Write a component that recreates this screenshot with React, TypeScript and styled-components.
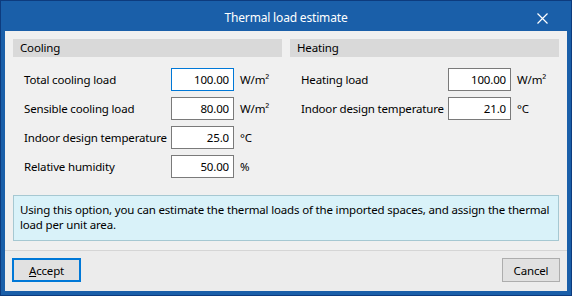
import { createGlobalStyle, styled } from 'styled-components';

const GlobalStyle = createGlobalStyle`
  html, body {
    margin: 0;
    padding: 0;
    background: #f0f0f0;
  }
  body {
    font-family: "Noto Sans", "Open Sans", sans-serif;
    font-size: 11.5px;
    letter-spacing: -0.17px;
    color: #000;
  }
`;

type Field = { label: string; value: string; unit: string; focused?: boolean };

const cooling: Field[] = [
  { label: 'Total cooling load', value: '100.00', unit: 'W/m²', focused: true },
  { label: 'Sensible cooling load', value: '80.00', unit: 'W/m²' },
  { label: 'Indoor design temperature', value: '25.0', unit: '°C' },
  { label: 'Relative humidity', value: '50.00', unit: '%' },
];

const heating: Field[] = [
  { label: 'Heating load', value: '100.00', unit: 'W/m²' },
  { label: 'Indoor design temperature', value: '21.0', unit: '°C' },
];

function Section({ title, fields }: { title: string; fields: Field[] }) {
  return (
    <SectionBox>
      <SectionHeader>{title}</SectionHeader>
      <FieldGrid>
        {fields.map((f) => (
          <FieldRow key={f.label}>
            <FieldLabel>{f.label}</FieldLabel>
            <ValueBox $focused={f.focused}>{f.value}</ValueBox>
            <Unit>{f.unit}</Unit>
          </FieldRow>
        ))}
      </FieldGrid>
    </SectionBox>
  );
}

function App() {
  return (
    <>
      <GlobalStyle />
      <Window>
        <TitleBar>
          <Title>Thermal load estimate</Title>
          <CloseButton>
            <svg width="11" height="11" viewBox="0 0 11 11">
              <path d="M0.5 0.5 L10.5 10.5 M10.5 0.5 L0.5 10.5" stroke="#fff" strokeWidth="1.2" />
            </svg>
          </CloseButton>
        </TitleBar>
        <Body>
          <Columns>
            <Section title="Cooling" fields={cooling} />
            <Section title="Heating" fields={heating} />
          </Columns>
          <InfoBox>
            Using this option, you can estimate the thermal loads of the imported spaces, and assign the thermal
            load per unit area.
          </InfoBox>
        </Body>
        <Footer>
          <Button $primary>
            <u>A</u>ccept
          </Button>
          <Button>Cancel</Button>
        </Footer>
      </Window>
    </>
  );
}

const Window = styled.div`
  width: 572px;
  height: 296px;
  box-sizing: border-box;
  background: #1a5fa9;
  border: 1px solid #0d3b7e;
  border-top: none;
  padding: 0 4px 4px 4px;
  display: flex;
  flex-direction: column;
`;

const TitleBar = styled.div`
  height: 31px;
  flex: none;
  position: relative;
  display: flex;
  align-items: center;
  justify-content: center;
  color: #fff;
  border-top: 1px solid #0d3b7e;
  margin: 0 -4px;
  box-sizing: border-box;
`;

const Title = styled.div`
  font-size: 12px;
  margin-top: 2px;
`;

const CloseButton = styled.div`
  position: absolute;
  right: 23px;
  top: 12px;
  width: 11px;
  height: 11px;
  display: flex;
`;

const Body = styled.div`
  flex: 1;
  background: #f0f0f0;
  padding: 8px 8px 9px 8px;
  display: flex;
  flex-direction: column;
  justify-content: space-between;
  border-bottom: 1px solid #d5d5d5;
`;

const Columns = styled.div`
  display: grid;
  grid-template-columns: 1fr 1fr;
  gap: 8px;
`;

const SectionBox = styled.div`
  display: flex;
  flex-direction: column;
`;

const SectionHeader = styled.div`
  height: 18px;
  line-height: 18px;
  background: #d9d9d9;
  padding-left: 7px;
`;

const FieldGrid = styled.div`
  display: flex;
  flex-direction: column;
  gap: 6px;
  padding: 11px 0 0 11px;
`;

const FieldRow = styled.div`
  display: grid;
  grid-template-columns: 147px 63px auto;
  align-items: center;
  height: 23px;
`;

const FieldLabel = styled.span`
  white-space: nowrap;
`;

const ValueBox = styled.div<{ $focused?: boolean }>`
  height: 23px;
  box-sizing: border-box;
  border: 1px solid ${(p) => (p.$focused ? '#0078d7' : '#7a7a7a')};
  background: #fff;
  text-align: right;
  padding-right: 4px;
  line-height: 21px;
`;

const Unit = styled.span`
  padding-left: 6px;
`;

const InfoBox = styled.div`
  background: #d9f2f9;
  border: 1px solid #a6c8d2;
  padding: 6px 6px 6px 6px;
  line-height: 15px;
  height: 46px;
  box-sizing: border-box;
`;

const Footer = styled.div`
  height: 40px;
  flex: none;
  background: #ececec;
  display: flex;
  justify-content: space-between;
  align-items: flex-start;
  padding: 7px 7px 0 7px;
  box-sizing: border-box;
`;

const Button = styled.div<{ $primary?: boolean }>`
  height: 24px;
  box-sizing: border-box;
  min-width: ${(p) => (p.$primary ? '69px' : '58px')};
  border: ${(p) => (p.$primary ? '2px solid #0078d7' : '1px solid #adadad')};
  background: #e1e1e1;
  display: flex;
  align-items: center;
  justify-content: center;
  padding: 0 10px;
`;

export default App;
